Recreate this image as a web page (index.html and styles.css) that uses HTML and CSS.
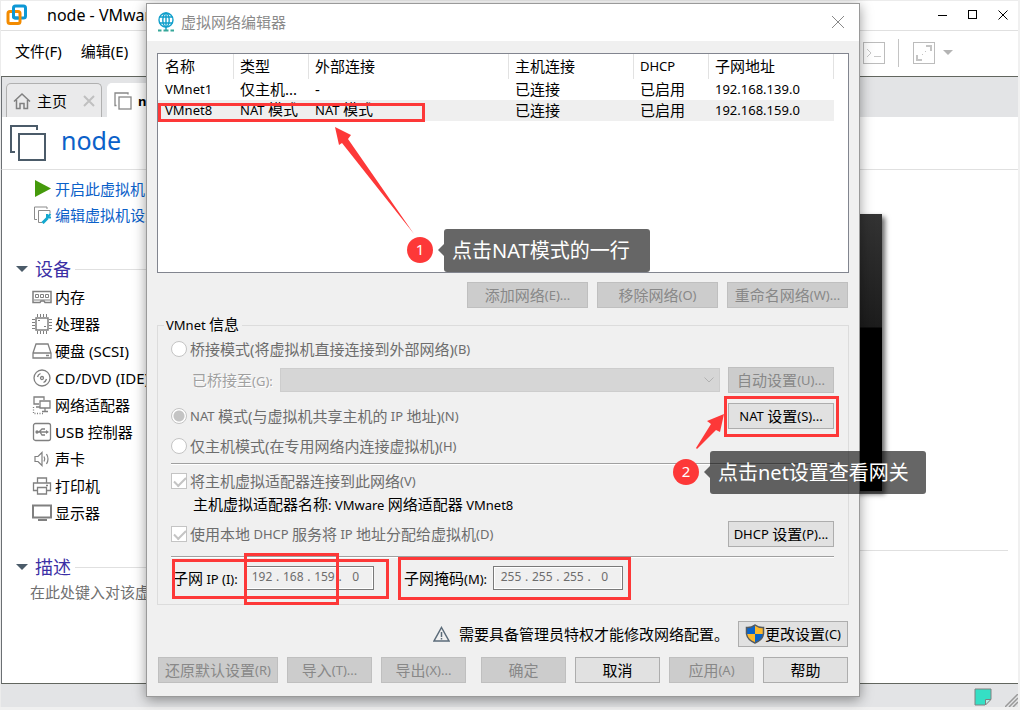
FILE: index.html
```
<!DOCTYPE html>
<html lang="zh-CN">
<head>
  <meta charset="UTF-8" />
  <meta name="viewport" content="width=device-width, initial-scale=1.0"/>
  <title>node - VMware</title>
  <link rel="stylesheet" href="styles.css">
</head>
<body>
  <div class="window">
    <header class="titlebar">
      <svg class="logo" width="22" height="22" viewBox="0 0 22 22" fill="none" stroke-width="3">
        <rect x="7.5" y="2" width="12" height="12" rx="2" stroke="#0d97d5"/>
        <rect x="2" y="7.5" width="12" height="12" rx="2" stroke="#f38b00"/>
        <path d="M7.5 5v7a2 2 0 0 0 2 2h3" stroke="#0d97d5"/>
      </svg>
      <span class="title">node - VMware</span>
      <div class="window-buttons">
        <button aria-label="最小化"><svg width="10" height="10"><path d="M0 5.5h9" stroke="#000"/></svg></button>
        <button aria-label="最大化"><svg width="10" height="10"><rect x=".5" y=".5" width="8" height="8" fill="none" stroke="#000"/></svg></button>
        <button aria-label="关闭"><svg width="10" height="10"><path d="M.5.5l9 9M9.5.5l-9 9" stroke="#000"/></svg></button>
      </div>
    </header>

    <nav class="menubar">
      <button>文件(F)</button>
      <button>编辑(E)</button>
      <div class="toolbar">
        <svg width="24" height="24" fill="none" stroke="#bcbcbc"><rect x="1.5" y="1.5" width="21" height="21"/><path d="M5 8l4 4-4 4M12 15.5h7" stroke="#c8c8c8"/></svg>
        <i class="divider"></i>
        <svg width="24" height="24" fill="none" stroke="#bcbcbc"><rect x="1.5" y="1.5" width="21" height="21"/><path d="M14 5h5v5M5 14v5h5" stroke="#c4c4c4" stroke-width="2"/><path d="M10 14l1-1M13 11l1-1" stroke="#c4c4c4"/></svg>
        <svg class="drop" width="10" height="6"><path d="M0 0h10L5 5z" fill="#b4b4b4"/></svg>
      </div>
    </nav>

    <div class="tabs">
      <div class="tab">
        <svg width="18" height="18" fill="none" stroke="#808080" stroke-width="1.5"><path d="M1 9.5L9 2l8 7.5M3.5 8v8.5H7v-5h4v5h3.500V8"/></svg>
        <span>主页</span>
        <svg class="tab-close" width="12" height="12" stroke="#c0c0c0" stroke-width="2"><path d="M1 1l10 10M11 1L1 11"/></svg>
      </div>
      <div class="tab active">
        <svg width="18" height="18" fill="none" stroke="#888" stroke-width="1.3"><path d="M2.5 13.5H1V1h13v1.5"/><rect x="5" y="5" width="12" height="12"/></svg>
        <span>node</span>
      </div>
    </div>

    <div class="vm-name">
      <svg width="36" height="36" fill="none" stroke="#4b5b69" stroke-width="2"><path d="M5 27H1V1h26v4"/><rect x="9" y="9" width="26" height="26"/></svg>
      <h1>node</h1>
    </div>

    <main class="vm">
      <aside class="sidebar">
        <ul class="commands">
          <li><svg width="20" height="18"><path d="M2 0v17l16-8.500z" fill="#459a0c"/></svg><a href="#">开启此虚拟机</a></li>
          <li><svg width="20" height="18" fill="none" stroke="#8b8b8b"><path d="M4 13.5H1.5V1H14v2"/><path d="M9 16.5H5.500V4.500H17v3"/><path d="M9.500 17l5-5" stroke="#12a8cf" stroke-width="3"/><path d="M17.500 8l-2.500 2.500M14 8v3.500h4" stroke="#12a8cf" stroke-width="2"/></svg><a href="#">编辑虚拟机设置</a></li>
        </ul>

        <h2 class="devices-title">设备</h2>
        <ul class="devices">
          <li><svg width="20" height="20" fill="none" stroke="#808080"><path d="M1 4.500h18v11h-6l-1-1.500H9l-1 1.500H1z" stroke-width="1.500"/><path d="M3.500 7.500h3v3h-3zM8.500 7.500h3v3h-3zM13.500 7.500h3v3h-3zM2 13h16"/></svg>内存</li>
          <li><svg width="20" height="20" fill="none" stroke="#808080"><rect x="4" y="4" width="12" height="12" stroke-width="1.500"/><path d="M5.500 0v3M8.500 0v3M11.500 0v3M14.500 0v3M5.500 17v3M8.500 17v3M11.500 17v3M14.500 17v3M0 5.500h3M0 8.500h3M0 11.500h3M0 14.500h3M17 5.500h3M17 8.500h3M17 11.500h3M17 14.500h3M6 6.500h2M12 12.500h2"/></svg>处理器</li>
          <li><svg width="20" height="20" fill="none" stroke="#808080" stroke-width="1.300"><path d="M1 12L4 3h12l3 9v5H1zM1 12h18M14 14.500h3"/></svg>硬盘 (SCSI)</li>
          <li><svg width="20" height="20" fill="none" stroke="#808080" stroke-width="1.300"><circle cx="10" cy="10" r="8"/><circle cx="10" cy="10" r="1.500"/><path d="M5.500 9a5 5 0 0 1 3-3.500M14.500 11a5 5 0 0 1-3 3.500"/></svg>CD/DVD (IDE)</li>
          <li><svg width="20" height="20" fill="none" stroke="#808080" stroke-width="1.300"><path d="M7 9H2V2h10v3M4 12h4"/><path d="M8 6h10v7H8zM13 13v3M10 16.500h6"/><path d="M1.500 12v6.500H12" stroke-dasharray="1 1.500"/></svg>网络适配器</li>
          <li><svg width="20" height="20" fill="none" stroke="#808080" stroke-width="1.300"><rect x="1.500" y="1.500" width="17" height="17" rx="2"/><path d="M4 10h11M7 10l3-3h3M8 10l2 3h3"/><circle cx="5" cy="10" r="1" fill="#808080"/><path d="M14 8l3 2-3 2z" fill="#808080" stroke="none"/></svg>USB 控制器</li>
          <li><svg width="20" height="20" fill="none" stroke="#808080" stroke-width="1.200"><path d="M3 7.500h3l4-4v13l-4-4H3zM12 7.500q1.500 2.500 0 5M14.500 5q3 5 0 10"/></svg>声卡</li>
          <li><svg width="20" height="20" fill="none" stroke="#808080" stroke-width="1.300"><path d="M5.500 7V2h9v5M5 14.500H1.500V7h17v7.500H15M5.500 11.500h9v6.500h-9zM14 9.500h2"/></svg>打印机</li>
          <li><svg width="20" height="20" fill="none" stroke="#808080" stroke-width="2"><path d="M1 2.500h18v12H1z"/><path d="M6 17h9"/></svg>显示器</li>
        </ul>

        <h2 class="desc-title">描述</h2>
        <p class="desc">在此处键入对该虚</p>
      </aside>
      <section class="preview"><div class="screen"></div></section>
    </main>

    <footer class="statusbar">
      <svg width="18" height="18"><path d="M1 1h16v10l-6 6H1z" fill="#35dfc5" stroke="#808080"/><path d="M17 11.500h-5.500V17z" fill="#b5eee5" stroke="#808080"/></svg>
      <svg width="13" height="13" stroke="#999" stroke-width="1.500"><path d="M0 13L13 0M4 13l9-9M8 13l5-5"/></svg>
    </footer>
  </div>

  <div class="dialog" role="dialog" aria-labelledby="dialog-title">
    <header class="dialog-title">
      <svg width="18" height="20" viewBox="0 0 18 20" fill="none" stroke="#119fcb" stroke-width="1.400"><circle cx="9" cy="8" r="7"/><ellipse cx="9" cy="8" rx="3.200" ry="7"/><path d="M2.500 5h13M2.500 11h13M9 1v17"/><path d="M1 18.500h3.500M6.500 18.500h5M13.500 18.500H17" stroke="#36a79a" stroke-width="2"/></svg>
      <span id="dialog-title">虚拟网络编辑器</span>
      <button class="close" aria-label="关闭"><svg width="12" height="12" stroke="#888"><path d="M0 0l12 12M12 0L0 12"/></svg></button>
    </header>

    <div class="dialog-body">
      <div class="list">
        <table>
          <colgroup><col class="c-name"><col class="c-short"><col class="c-ext"><col class="c-long"><col class="c-short"><col class="c-long"></colgroup>
          <thead>
            <tr><th>名称</th><th>类型</th><th>外部连接</th><th>主机连接</th><th><span class="en">DHCP</span></th><th>子网地址</th></tr>
          </thead>
          <tbody>
            <tr><td><span class="en">VMnet1</span></td><td>仅主机...</td><td>-</td><td>已连接</td><td>已启用</td><td><span class="en">192.168.139.0</span></td></tr>
            <tr class="selected"><td><span class="en">VMnet8</span></td><td><span class="en">NAT </span>模式</td><td><span class="en">NAT </span>模式</td><td>已连接</td><td>已启用</td><td><span class="en">192.168.159.0</span></td></tr>
          </tbody>
        </table>
      </div>

      <div class="list-buttons">
        <button class="btn" disabled>添加网络<span class="en">(E)...</span></button>
        <button class="btn" disabled>移除网络<span class="en">(O)</span></button>
        <button class="btn" disabled>重命名网络<span class="en">(W)...</span></button>
      </div>

      <fieldset class="info">
        <legend><span class="en">VMnet </span>信息</legend>

        <div class="row">
          <label class="choice"><input type="radio" name="mode" disabled>桥接模式(将虚拟机直接连接到外部网络)<span class="en">(B)</span></label>
        </div>
        <div class="row bridge">
          <label for="bridged">已桥接至<span class="en">(G):</span></label>
          <select id="bridged" disabled><option></option></select>
          <button class="btn" disabled>自动设置<span class="en">(U)...</span></button>
        </div>
        <div class="row nat">
          <label class="choice"><input type="radio" name="mode" checked disabled><span class="en">NAT </span>模式(与虚拟机共享主机的<span class="en"> IP </span>地址)<span class="en">(N)</span></label>
          <button class="btn"><span class="en">NAT </span>设置<span class="en">(S)...</span></button>
        </div>
        <div class="row host">
          <label class="choice"><input type="radio" name="mode" disabled>仅主机模式(在专用网络内连接虚拟机)<span class="en">(H)</span></label>
        </div>
        <hr class="first">
        <div class="row adapter">
          <label class="choice"><input type="checkbox" checked disabled>将主机虚拟适配器连接到此网络<span class="en">(V)</span></label>
        </div>
        <p class="adapter-name">主机虚拟适配器名称<span class="en">: VMware </span>网络适配器<span class="en"> VMnet8</span></p>
        <div class="row dhcp">
          <label class="choice"><input type="checkbox" checked disabled>使用本地<span class="en"> DHCP </span>服务将<span class="en"> IP </span>地址分配给虚拟机<span class="en">(D)</span></label>
          <button class="btn"><span class="en">DHCP </span>设置<span class="en">(P)...</span></button>
        </div>
        <hr class="second">
        <div class="addresses">
          <label for="ip">子网<span class="en"> IP (I):</span></label>
          <div class="ip">
            <input id="ip" value="192" disabled>.<input aria-label="IP 2" value="168" disabled>.<input aria-label="IP 3" value="159" disabled>.<input aria-label="IP 4" value="0" disabled>
          </div>
          <label for="mask" class="mask-label">子网掩码<span class="en">(M):</span></label>
          <div class="ip">
            <input id="mask" value="255" disabled>.<input aria-label="掩码 2" value="255" disabled>.<input aria-label="掩码 3" value="255" disabled>.<input aria-label="掩码 4" value="0" disabled>
          </div>
        </div>
      </fieldset>

      <div class="admin">
        <svg width="17" height="16" fill="none" stroke="#5b6b79"><path d="M8.500 1.500l7.500 13.500H1z" stroke-width="1.500"/><path d="M8.500 6v5M8.500 12v1.500" stroke-width="1.500"/></svg>
        <span>需要具备管理员特权才能修改网络配置。</span>
        <button class="btn">
          <svg width="20" height="20" viewBox="0 0 20 20"><path d="M10 1Q6 4 1.500 3.500V10q1 6 8.500 9z" fill="#0a63c9"/><path d="M10 1q4 3 8.500 2.500V10q-1 6-8.500 9z" fill="#fdb92c"/><path d="M1.500 10H10v9Q2.500 16 1.500 10z" fill="#fdb92c"/><path d="M18.500 10H10v9q7.500-3 8.500-9z" fill="#0a63c9"/><path d="M10 1Q6 4 1.500 3.500V10q1 6 8.500 9 7.500-3 8.500-9V3.500Q14 4 10 1z" fill="none" stroke="#555b60" stroke-width="1.500"/></svg>更改设置<span class="en">(C)</span>
        </button>
      </div>

      <div class="actions">
        <button class="btn restore" disabled>还原默认设置<span class="en">(R)</span></button>
        <button class="btn" disabled>导入<span class="en">(T)...</span></button>
        <button class="btn" disabled>导出<span class="en">(X)...</span></button>
        <button class="btn ok" disabled>确定</button>
        <button class="btn">取消</button>
        <button class="btn" disabled>应用<span class="en">(A)</span></button>
        <button class="btn">帮助</button>
      </div>
    </div>
  </div>

  <!-- tutorial marks over the dialog -->
  <div class="mark mark-row"></div>
  <div class="mark mark-nat"></div>
  <div class="mark mark-ip"></div>
  <div class="mark mark-ip-net"></div>
  <div class="mark mark-mask"></div>
  <svg class="arrow arrow-1" width="84" height="110"><path d="M2 0l16 8-3 4 66 95L9 16l-3 2z" fill="#fd3838"/></svg>
  <svg class="arrow arrow-2" width="30" height="37"><path d="M28 0L11 7l4 3L0 34l1 1 19-19 4 2z" fill="#fd3838"/></svg>
  <span class="step step-1">1</span>
  <span class="step step-2">2</span>
  <div class="tip tip-1">点击NAT模式的一行</div>
  <div class="tip tip-2">点击net设置查看网关</div>
</body>
</html>
```
FILE: styles.css
```
* {
  box-sizing: border-box;
}

body {
  margin: 0;
  height: 100vh;
  overflow: hidden;
  background: #f0f0f0;
  font-family: "Noto Sans", "Noto Sans CJK SC", sans-serif;
  font-size: 15px;
  line-height: 20px;
  color: #000;
}

ul, p, h1, h2 {
  margin: 0;
  padding: 0;
  list-style: none;
  font-weight: normal;
}

button {
  padding: 0;
  border: none;
  background: none;
  font: inherit;
  color: inherit;
}

svg {
  display: block;
  flex: none;
}

.en {
  font-size: 13px;
  white-space: pre;
}

/* main window */
.window {
  display: flex;
  flex-direction: column;
  height: calc(100vh - 3px);
  margin-right: 2px;
  border-top: 1px solid #ececec;
  border-left: 1px solid #ececec;
  background: #fff;
}

.titlebar {
  display: flex;
  align-items: center;
  height: 30px;
  padding: 0 10px 1px 5px;
  border-bottom: 1px solid #e0e0e0;
}

.titlebar .title {
  margin-left: 19px;
  font-size: 16px;
}

.window-buttons {
  display: flex;
  gap: 20px;
  margin-left: auto;
}

.menubar {
  display: flex;
  align-items: center;
  gap: 19px;
  height: 45px;
  padding: 0 65px 2px 14px;
}

.menubar button {
  padding-bottom: 4px;
}

.toolbar {
  display: flex;
  align-items: center;
  margin-left: auto;
}

.divider {
  width: 1px;
  height: 28px;
  margin: 0 13px 0 12px;
  background: #c4c4c4;
}

.drop {
  margin-left: 7px;
}

.tabs {
  display: flex;
  gap: 5px;
  height: 41px;
  padding: 6px 4px 0;
  border-top: 1px solid #62665f;
  border-left: 1px solid #6b6f73;
  background: #e3e4e6;
}

.tab {
  display: flex;
  align-items: center;
  gap: 6px;
  width: 96px;
  padding: 0 6px;
  border: 1px solid #b0b0b0;
  border-bottom: none;
  border-radius: 5px 5px 0 0;
  background: #eaeaeb;
  white-space: nowrap;
}

.tab-close {
  margin-left: auto;
}

.tab.active {
  border-color: #fff;
  background: #fff;
  font-size: 13px;
  font-weight: bold;
}

.vm-name {
  display: flex;
  align-items: center;
  gap: 15px;
  height: 53px;
  padding: 0 8px;
  border-left: 1px solid #6b6f73;
  border-bottom: 1px solid #e0e0e0;
}

.vm-name h1 {
  padding-bottom: 6px;
  font-size: 25px;
  line-height: 32px;
  color: #0b61c9;
}

.vm {
  flex: 1;
  display: flex;
  border-left: 1px solid #6b6f73;
  border-bottom: 1px solid #62665f;
}

.sidebar {
  width: 280px;
}

.commands {
  padding: 6px 0 0 31px;
}

.commands li {
  display: flex;
  align-items: center;
  gap: 2px;
  height: 26px;
  white-space: nowrap;
}

.commands a {
  color: #0b61c9;
  text-decoration: none;
}

.sidebar h2 {
  display: flex;
  align-items: center;
  gap: 4px;
  height: 26px;
  padding-left: 14px;
  font-size: 18px;
  color: #3b2fa5;
}

.sidebar h2::before {
  content: "";
  margin-right: 3px;
  border: 6px solid transparent;
  border-top-color: #4b5b69;
  border-bottom: none;
}

.sidebar h2::after {
  content: "";
  flex: 1;
  height: 1px;
  background: #e0e0e0;
}

.devices-title {
  margin-top: 28px;
}

.devices {
  padding: 1px 0 0 30px;
}

.devices li {
  display: flex;
  align-items: center;
  gap: 3px;
  height: 27px;
}

.desc-title {
  margin-top: 28px;
}

.desc {
  padding: 2px 0 0 28px;
  color: #707070;
  white-space: nowrap;
}

.preview {
  flex: 1;
  display: flex;
  align-items: flex-start;
  height: 381px;
  margin-right: 10px;
  padding-top: 44px;
  border-bottom: 1px solid #e0e0e0;
}

.screen {
  width: 600px;
  height: 277px;
  background: linear-gradient(#333, #1c1c1c 113px, #000 114px);
  box-shadow: 3px 3px 5px rgba(0, 0, 0, 0.6);
}

.statusbar {
  display: flex;
  justify-content: flex-end;
  align-items: flex-end;
  gap: 13px;
  height: 23px;
  background: #e3e4e6;
}

.statusbar svg:first-child {
  margin-bottom: 1px;
}

/* network editor dialog */
.dialog {
  position: absolute;
  top: 3px;
  left: 146px;
  right: 160px;
  border: 1px solid #9a9a9a;
  background: #f0f0f0;
  box-shadow: 0 3px 12px rgba(0, 0, 0, 0.4);
}

.dialog-title {
  display: flex;
  align-items: center;
  gap: 6px;
  height: 37px;
  padding: 0 15px 1px 10px;
  background: #fff;
  color: #8a8a8a;
}

.close {
  margin-left: auto;
}

.dialog-body {
  padding: 12px 10px 13px;
}

.list {
  height: 220px;
  border: 1px solid #82858f;
  background: #fff;
}

table {
  width: 676px;
  table-layout: fixed;
  border-spacing: 0;
}

.c-name {
  width: 76px;
}

.c-short {
  width: 75px;
}

.c-ext {
  width: 200px;
}

.c-long {
  width: 125px;
}

th {
  height: 25px;
  padding: 0 0 2px 7px;
  border-right: 1px solid #e2e2e2;
  font-weight: normal;
  text-align: left;
}

td {
  height: 20px;
  padding: 0 0 2px 7px;
  line-height: 18px;
  white-space: nowrap;
}

th + th,
td + td {
  padding-left: 6px;
}

.selected td {
  background: #efefef;
}

.btn {
  display: flex;
  align-items: center;
  justify-content: center;
  height: 26px;
  padding-bottom: 1px;
  border: 1px solid #adadad;
  background: #e1e1e1;
  white-space: nowrap;
}

.btn:disabled {
  border-color: #bfbfbf;
  background: #ccc;
  color: #888;
}

.list-buttons {
  display: flex;
  justify-content: flex-end;
  gap: 9px;
  margin-top: 9px;
  padding-right: 1px;
}

.list-buttons .btn {
  width: 121px;
}

.info {
  margin: 7px 0 0;
  padding: 1px 14px 14px 13px;
  border: 1px solid #dcdcdc;
}

.info legend {
  height: 20px;
  margin-left: -7px;
  padding: 0 3px 0 2px;
  line-height: 18px;
}

.row {
  display: flex;
  align-items: center;
  height: 26px;
}

.row .btn {
  width: 106px;
  margin-left: auto;
}

.choice {
  display: flex;
  align-items: center;
  color: #6d6d6d;
  white-space: nowrap;
}

.choice input {
  appearance: none;
  width: 16px;
  height: 16px;
  margin: 0 3px 0 0;
  border: 1px solid #c4c4c4;
  background: #fff;
}

.choice input[type="radio"] {
  border-radius: 50%;
}

.choice input[type="radio"]:checked {
  background: radial-gradient(#c4c4c4 5px, #fff 6px);
}

.choice input[type="checkbox"]:checked::before {
  content: "";
  display: block;
  width: 10px;
  height: 5px;
  margin: 3px 0 0 2px;
  border-left: 2px solid #c4c4c4;
  border-bottom: 2px solid #c4c4c4;
  transform: rotate(-45deg);
}

.bridge {
  gap: 8px;
  margin-top: 5px;
  padding-left: 21px;
}

.bridge label {
  width: 80px;
  color: #a0a0a0;
  text-shadow: 1px 1px #fff;
  white-space: nowrap;
}

.bridge select {
  flex: 1;
  height: 24px;
  appearance: none;
  border: 1px solid #bfbfbf;
  border-radius: 0;
  background: #ccc url("data:image/svg+xml,%3Csvg xmlns='http://www.w3.org/2000/svg' width='10' height='6' fill='none' stroke='%23999'%3E%3Cpath d='M.5.5L5 5l4.500-4.500'/%3E%3C/svg%3E") no-repeat right 5px center;
}

.nat {
  margin-top: 10px;
}

.host {
  margin-top: 4px;
}

hr {
  height: 2px;
  border: none;
  border-top: 1px solid #a0a0a0;
  background: #fff;
}

hr.first {
  margin: 4px 0 6px;
}

hr.second {
  margin: 9px 0 8px;
}

.adapter {
  height: 20px;
}

.adapter-name {
  height: 20px;
  margin-top: 3px;
  padding-left: 22px;
}

.dhcp {
  margin-top: 7px;
}

.addresses {
  display: flex;
  align-items: center;
}

.addresses label {
  width: 73px;
  padding-left: 2px;
  white-space: nowrap;
}

.addresses .mask-label {
  width: 89px;
  margin-left: 30px;
  padding: 0;
}

.ip {
  display: flex;
  align-items: center;
  width: 130px;
  height: 24px;
  padding: 0 0 2px 3px;
  border: 1px solid #7a7a7a;
  box-shadow: inset 0 0 0 1px #fff;
  font-size: 12px;
  color: #6d6d6d;
}

.ip input {
  width: 28px;
  height: 20px;
  padding: 0;
  border: none;
  background: none;
  font: inherit;
  color: inherit;
  text-align: center;
}

.admin {
  display: flex;
  justify-content: flex-end;
  align-items: center;
  gap: 9px;
  margin-top: 16px;
  padding-right: 1px;
}

.admin .btn {
  width: 110px;
}

.actions {
  display: flex;
  gap: 9px;
  margin-top: 10px;
  padding: 0 1px;
}

.actions .btn {
  width: 85px;
}

.actions .restore {
  width: 120px;
}

.actions .ok {
  margin-left: 6px;
}

/* tutorial marks */
.mark {
  position: absolute;
  border: 3px solid #fd3838;
}

.mark-row {
  top: 103px;
  left: 158px;
  width: 267px;
  height: 19px;
}

.mark-nat {
  top: 396px;
  left: 724px;
  width: 115px;
  height: 41px;
}

.mark-ip {
  top: 559px;
  left: 172px;
  width: 217px;
  height: 40px;
}

.mark-ip-net {
  top: 553px;
  left: 244px;
  width: 95px;
  height: 52px;
}

.mark-mask {
  top: 557px;
  left: 398px;
  width: 233px;
  height: 43px;
}

.arrow {
  position: absolute;
}

.arrow-1 {
  top: 127px;
  left: 333px;
}

.arrow-2 {
  top: 414px;
  left: 696px;
}

.step {
  position: absolute;
  width: 26px;
  height: 26px;
  border-radius: 50%;
  background: #fd3838;
  color: #fff;
  line-height: 25px;
  text-align: center;
}

.step-1 {
  top: 237px;
  left: 407px;
}

.step-2 {
  top: 459px;
  left: 673px;
}

.tip {
  position: absolute;
  height: 43px;
  padding-left: 8px;
  border-radius: 3px;
  background: rgba(0, 0, 0, 0.6);
  color: #fff;
  font-size: 20px;
  line-height: 43px;
  white-space: nowrap;
}

.tip::before {
  content: "";
  position: absolute;
  top: 15px;
  left: -6px;
  border: 6px solid transparent;
  border-right-color: rgba(0, 0, 0, 0.6);
  border-left: none;
}

.tip-1 {
  top: 229px;
  left: 444px;
  width: 206px;
}

.tip-2 {
  top: 451px;
  left: 710px;
  width: 216px;
}
```
